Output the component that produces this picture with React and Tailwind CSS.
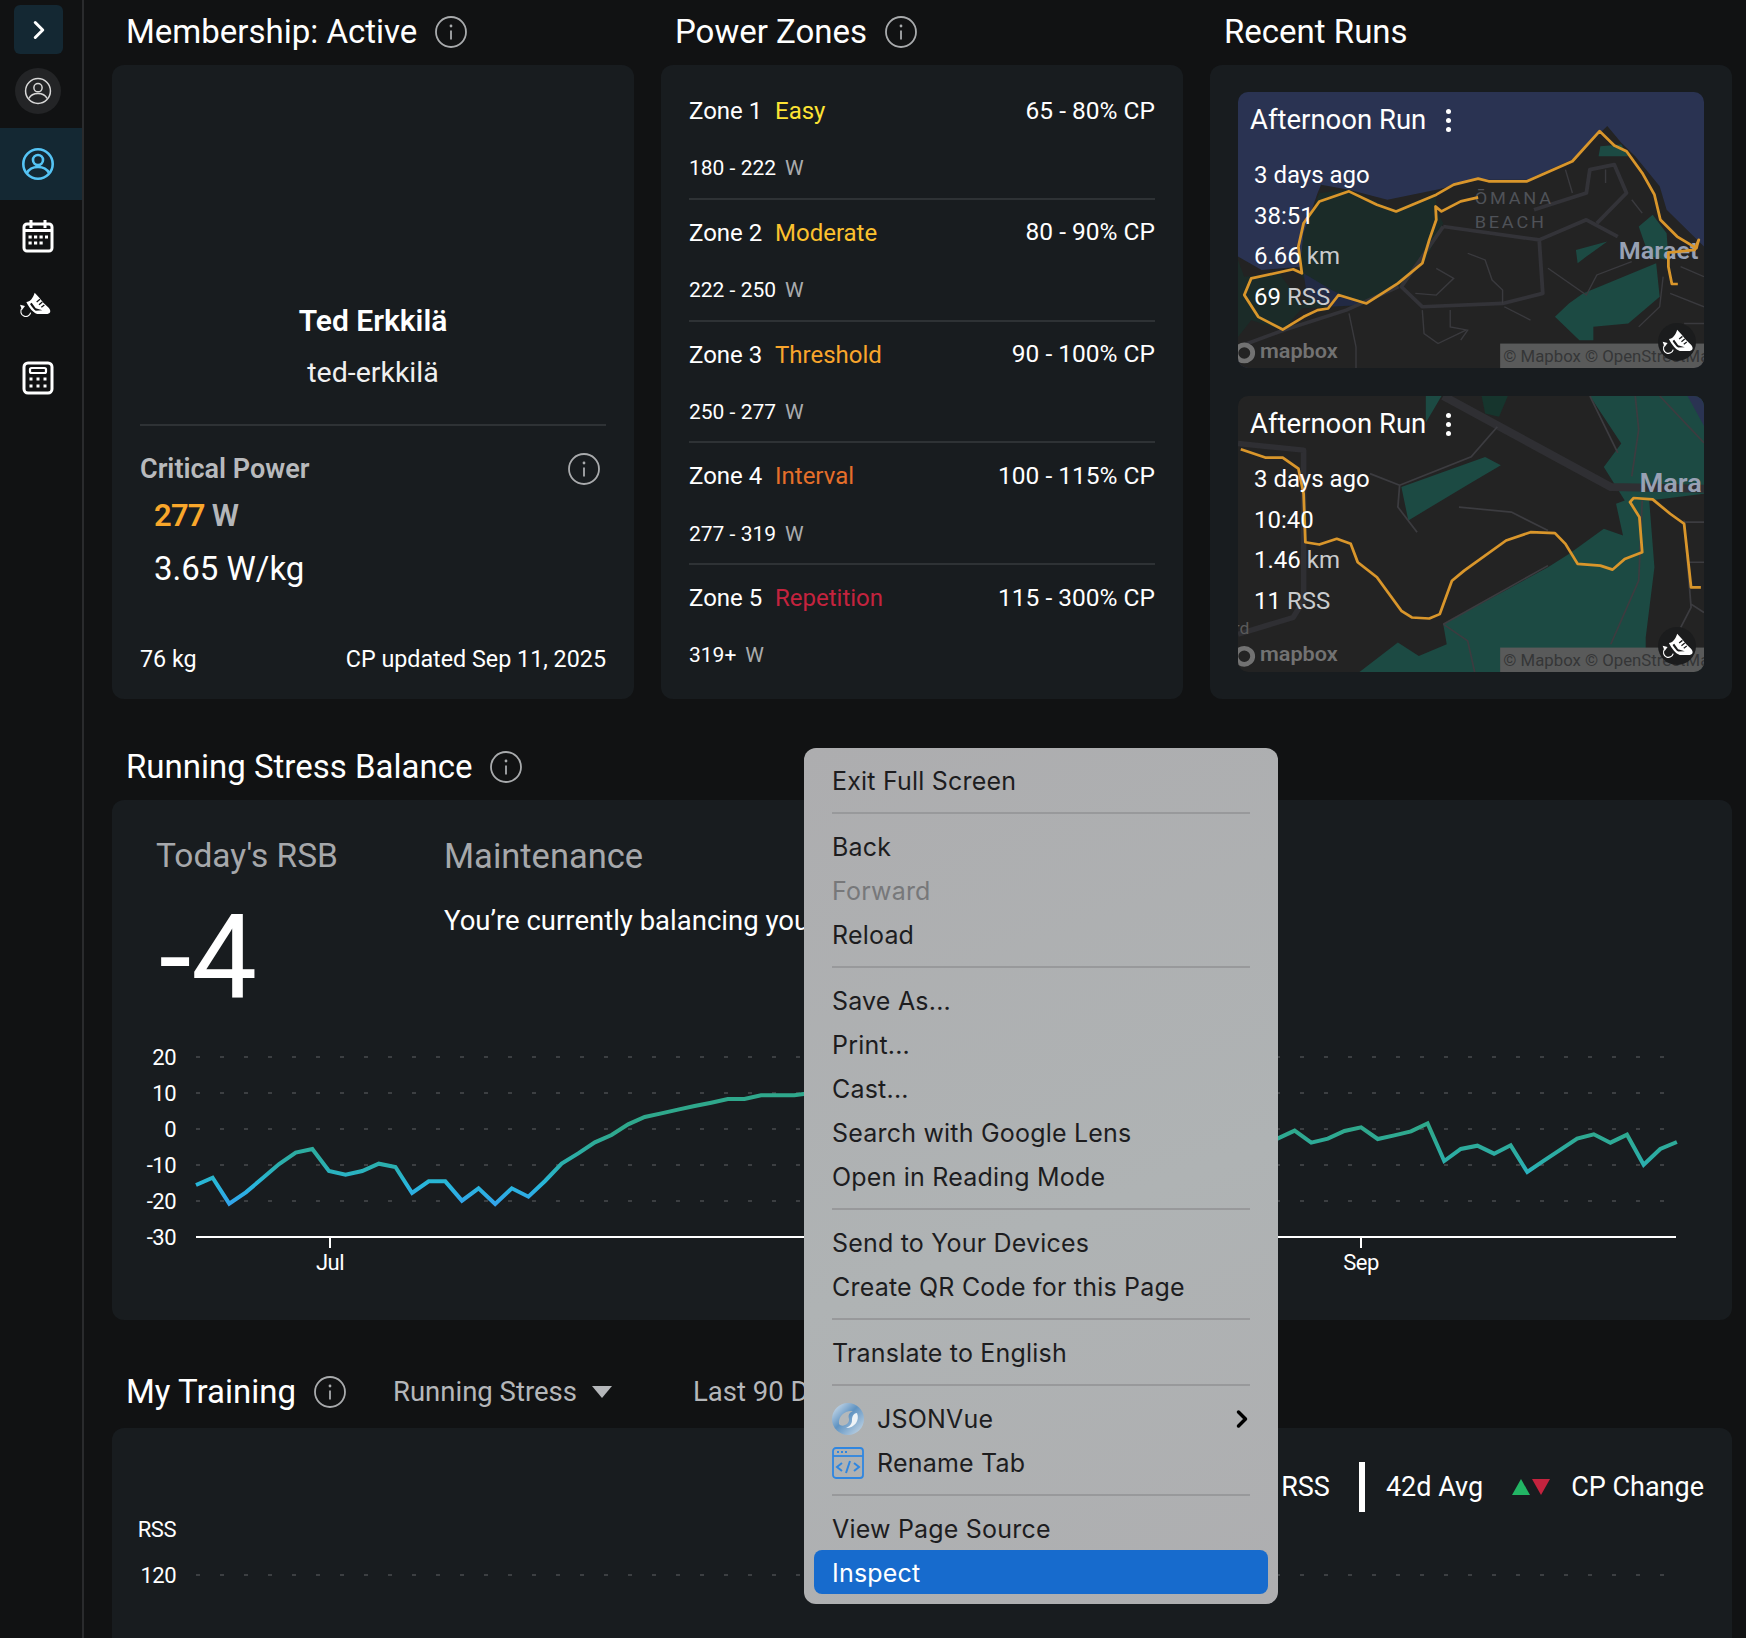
import React from 'react';
import { ChevronRight } from 'lucide-react';

const zones = [
  { name: 'Zone 1', label: 'Easy', color: 'text-[#fde334]', pct: '65 - 80% CP', watts: '180 - 222' },
  { name: 'Zone 2', label: 'Moderate', color: 'text-[#fcc12e]', pct: '80 - 90% CP', watts: '222 - 250' },
  { name: 'Zone 3', label: 'Threshold', color: 'text-[#f9a52c]', pct: '90 - 100% CP', watts: '250 - 277' },
  { name: 'Zone 4', label: 'Interval', color: 'text-[#e56f2a]', pct: '100 - 115% CP', watts: '277 - 319' },
  { name: 'Zone 5', label: 'Repetition', color: 'text-[#c4233e]', pct: '115 - 300% CP', watts: '319+' },
];

// y values read off the chart, one point per day
const rsbStart = [495, 473, 551, 517, 475, 432, 398, 387, 453, 464, 453, 431, 441, 519, 484, 484, 542, 505, 552, 505, 530, 483, 431, 400, 367, 345, 313, 291, 280, 269, 258, 248, 237, 237, 226, 226, 226, 219];
const rsbEnd = [235, 212, 248, 236, 213, 202, 237, 226, 214, 190, 303, 267, 257, 281, 256, 336, 302, 269, 236, 223, 248, 224, 314, 267, 246];

const rsbPoints = [
  ...rsbStart.map((y, i) => `${196 + i * 16.62},${1020 + y / 3}`),
  ...rsbEnd.map((y, i) => `${1278 + i * 16.62},${1060 + y / 3}`),
].join(' ');

const Info = ({ className = '' }) => (
  <svg viewBox="0 0 32 32" className={`w-8 h-8 shrink-0 ${className}`} fill="none">
    <circle cx="16" cy="16" r="15" stroke="#a9abad" strokeWidth="1.8" />
    <circle cx="16" cy="10" r="1.4" fill="#a9abad" />
    <path d="M16 14.5v9" stroke="#a9abad" strokeWidth="1.8" />
  </svg>
);

const UserCircle = ({ color, width, className }) => (
  <svg viewBox="0 0 34 34" className={className} fill="none">
    <circle cx="17" cy="17" r={16 - width / 2} stroke={color} strokeWidth={width} />
    <circle cx="17" cy="13" r="5" stroke={color} strokeWidth={width} />
    <path d="M6 26c2-4 6-6 11-6s9 2 11 6" stroke={color} strokeWidth={width} />
  </svg>
);

const CalendarIcon = () => (
  <svg viewBox="0 0 32 34" className="w-[32px] h-[34px]" fill="none">
    <rect x="2" y="5" width="28" height="27" rx="3" stroke="#fff" strokeWidth="3" />
    <path d="M2 11.5h28" stroke="#fff" strokeWidth="3" />
    <path d="M9 1v8M23 1v8" stroke="#fff" strokeWidth="3" />
    <path d="M6.5 18h3.2M12 18h3.2M17.5 18h3.2M23 18h3M6.5 24h3.2M12 24h3.2M17.5 24h3.2" stroke="#fff" strokeWidth="3" />
  </svg>
);

const CalcIcon = () => (
  <svg viewBox="0 0 32 34" className="w-[32px] h-[34px]" fill="none">
    <rect x="2" y="2" width="28" height="30" rx="4" stroke="#fff" strokeWidth="3" />
    <rect x="8" y="7" width="16" height="5" rx="1.5" stroke="#fff" strokeWidth="2.2" />
    <path d="M7.5 18h3M14.5 18h3M21.5 18h3M7.5 25h3M14.5 25h3M21.5 25h3" stroke="#fff" strokeWidth="3" />
  </svg>
);

// coordinates follow the shoe in the 3x crop of the sidebar
const RunIcon = ({ className, cut = '#111213' }) => (
  <svg viewBox="55 870 100 90" className={className} fill="none">
    <path d="M104 878l14 15 12 15 16 15c9 11 5 19-8 19h-26c-12-3-24-18-33-36 11-1 20-11 25-28z" fill="#fff" />
    <path d="M110 906l10-8M117 914l10-8M124 922l9-7" stroke={cut} strokeWidth="4" />
    <path d="M95 908l12 17 20 6-20 1c-6-4-12-12-17-20z" fill={cut} />
    <path d="M92 938a15 15 0 1 1-27-12" stroke="#fff" strokeWidth="3.5" />
    <path d="M60 914l15 4-9 12z" fill="#fff" />
  </svg>
);

const Heading = ({ children, info = true }) => (
  <div className="flex items-center gap-[18px] pl-[14px]">
    <h2 className="text-[33px] leading-[40px] text-white whitespace-nowrap">{children}</h2>
    {info && <Info />}
  </div>
);

const MapOne = () => (
  <svg viewBox="112 98 1335 825" preserveAspectRatio="none" className="absolute inset-0 w-full h-full">
    <rect x="112" y="98" width="1335" height="825" fill="#2a3352" />
    <path d="M112 590l68 40 110-10 10-100 40-120 10-25 80 15 110 30 140-30 120-30 140 0 130-60 100-100 40 50 40 40 70 90 20 70 107 110v363H112z" fill="#232323" />
    <path d="M300 520l45-120 85-10 130 60 120-50v50l20 40-50 110-80 80-100 55-180 10 40-45-40-60zM112 600l18 50 100-10 70 100-60 70-90-30-38 50z" fill="#1b2b28" />
    <path d="M300 640l80 50 90 45-100 5-60-30z" fill="#222a44" />
    <path d="M1100 700l210-90 10 100-90 80-100 10v40h-40l-70-70 40-40zM1260 500l40-35 40 55 5 80-55-10zM1150 260l60-5 20 35-85 0zM1080 570l90-25-60 45-25 20z" fill="#1c4a43" />
    <g fill="none" stroke="#333338" strokeWidth="11" strokeLinejoin="round">
      <path d="M700 500l275 40 135-60 90 50M975 540l10 160-115 30-230 10-60-60 120-180" />
      <path d="M960 450l150-50 10-70 70-15 35 85-85 90" />
      <path d="M112 860l130-50 180-60 150-70" />
    </g>
    <g fill="none" stroke="#3a3a3e" strokeWidth="4">
      <path d="M770 580l50 20 20 60 30 30v40M640 750l5 70 40 30 80-40M720 750v50l50 10-20 30M875 740l75 40M680 625l50 30-50 50-60-5" />
      <path d="M1000 625l110 80 30-60 100-40M1050 330l20 70M1165 330v40M1240 420l30 40M1330 650l-10 90-60 60M1380 620l67 30M1350 700l97 40M1390 790h57M430 760l20 100v63" />
    </g>
    <text x="790" y="432" fill="#4f5258" fontSize="52" letterSpacing="8">ŌMANA</text>
    <text x="790" y="505" fill="#4f5258" fontSize="52" letterSpacing="8">BEACH</text>
    <text x="1203" y="597" fill="#98a1b4" fontSize="72" fontWeight="600">Maraet</text>
    <polyline
      fill="none"
      stroke="#d9962b"
      strokeWidth="8"
      strokeLinejoin="round"
      points="800,413 750,425 695,455 678,440 680,480 660,540 640,610 570,670 480,730 400,705 370,745 340,750 300,770 240,808 170,770 130,705 150,655 270,628 295,640 285,560 300,490 345,425 430,395 510,435 565,455 680,405 730,375 800,357 830,365 940,365 1070,305 1148,215 1190,258 1225,275 1270,340 1305,405 1322,480 1370,530 1425,565 1432,540 1420,570 1345,578 1345,620 1355,672 1372,672"
    />
    <rect x="863" y="850" width="584" height="73" fill="#595a5a" />
    <text x="872" y="906" fill="#353637" fontSize="48">© Mapbox © OpenStreetMap</text>
    <circle cx="130" cy="878" r="24" fill="none" stroke="#727272" strokeWidth="14" />
    <text x="175" y="893" fill="#727272" fontSize="62" fontWeight="600">mapbox</text>
  </svg>
);

const MapTwo = () => (
  <svg viewBox="112 48 1335 825" preserveAspectRatio="none" className="absolute inset-0 w-full h-full">
    <rect x="112" y="48" width="1335" height="825" fill="#232323" />
    <path d="M1120 48h327v825H460l110-88 60 40 80-35-10-60 300-170 60-40 100-75 55 20-20-95 25-10-60-100 50-70z" fill="#1c4a43" />
    <path d="M1290 360l157-20v533h-167v-103l25-210z" fill="#232323" />
    <path d="M580 320l240-90 45 25-90 55-175 110zM650 48h45l-45 80z" fill="#1c4a43" />
    <path d="M810 48h75l-25 62-40-10z" fill="#16352d" />
    <path d="M1400 48h47v90z" fill="#2a3352" />
    <g fill="none" stroke="#2f2f33" strokeLinejoin="round">
      <path d="M700 48l480 272 267 5" strokeWidth="24" />
      <path d="M112 190l188 20v450l-30 50-158 50" strokeWidth="16" />
    </g>
    <g fill="none" stroke="#3c3c40" strokeWidth="5">
      <path d="M490 280l85 35-5 65 55 75M575 315l205-85 75-90M745 380l150 15 105 55M700 730l300-175M700 730l70 50 20 93" />
      <path d="M1270 360l-10 240-80 190M1390 420l20 260-30 60M1410 670l37 25M1390 425h57M1405 545h42M1250 48l10 100-20 140M1120 48l80 170M1320 48l127 140" />
    </g>
    <text x="1262" y="335" fill="#98a1b4" fontSize="78" fontWeight="600">Mara</text>
    <text x="100" y="760" fill="#5a5a5a" fontSize="50">rd</text>
    <polyline
      fill="none"
      stroke="#d9962b"
      strokeWidth="8"
      strokeLinejoin="round"
      points="120,207 190,232 240,232 285,265 300,340 305,485 345,492 395,475 435,490 455,545 510,590 580,690 610,710 660,713 690,700 725,600 760,570 880,480 950,455 1020,458 1050,490 1085,550 1150,555 1185,567 1220,535 1270,515 1262,410 1235,365 1245,353 1300,357 1350,400 1390,430 1410,620 1438,620"
    />
    <rect x="863" y="800" width="584" height="73" fill="#595a5a" />
    <text x="872" y="856" fill="#353637" fontSize="48">© Mapbox © OpenStreetMap</text>
    <circle cx="130" cy="826" r="24" fill="none" stroke="#727272" strokeWidth="14" />
    <text x="175" y="841" fill="#727272" fontSize="62" fontWeight="600">mapbox</text>
  </svg>
);

const RunCard = ({ map, time, km, rss }) => (
  <div className="relative h-[276px] rounded-[10px] overflow-hidden">
    {map}
    <div className="relative pl-[12px] pt-[10px]">
      <div className="flex items-center h-[36px] text-[27.5px] text-white">
        Afternoon Run
        <span className="ml-[20px] flex flex-col gap-[4px]">
          <i className="block w-[5px] h-[5px] rounded-full bg-white" />
          <i className="block w-[5px] h-[5px] rounded-full bg-white" />
          <i className="block w-[5px] h-[5px] rounded-full bg-white" />
        </span>
      </div>
      <div className="mt-[17px] pl-[4px] text-[24px] leading-[40.5px] text-white">
        <p>3 days ago</p>
        <p>{time}</p>
        <p>
          {km} <span className="text-[#c9cbcd]">km</span>
        </p>
        <p>
          {rss} <span className="text-[#c9cbcd]">RSS</span>
        </p>
      </div>
    </div>
    <div className="absolute right-[8px] bottom-[7px] w-[38px] h-[38px] rounded-full bg-[#1b1c1d] flex items-center justify-center">
      <RunIcon className="w-[33px] h-[30px]" cut="#1b1c1d" />
    </div>
  </div>
);

const MenuItem = ({ children, muted, active, icon, arrow }) => (
  <div
    className={`h-[44px] flex items-center rounded-[8px] pl-[18px] pr-[20px] pt-[4px] ${
      active ? 'bg-[#176bcd] text-white' : muted ? 'text-[#77787a]' : 'text-[#1d1d1f]'
    }`}
  >
    {icon && <span className="w-[45px] shrink-0 flex items-center -mt-[3px]">{icon}</span>}
    <span className="flex-1">{children}</span>
    {arrow && <ChevronRight size={28} strokeWidth={3} className="text-black -mr-[8px] -mt-[3px]" />}
  </div>
);

const Sep = () => <div className="h-[2px] my-[10px] mx-[18px] bg-[#98999b]" />;

const ContextMenu = () => (
  <div className="absolute left-[804px] top-[748px] w-[474px] h-[856px] rounded-[12px] px-[10px] pt-[10px] bg-[linear-gradient(160deg,#adadaf,#afb3b4_55%,#aeaeb0)] [font-family:Inter,sans-serif] text-[25px] tracking-[0.2px]">
    <MenuItem>Exit Full Screen</MenuItem>
    <Sep />
    <MenuItem>Back</MenuItem>
    <MenuItem muted>Forward</MenuItem>
    <MenuItem>Reload</MenuItem>
    <Sep />
    <MenuItem>Save As...</MenuItem>
    <MenuItem>Print...</MenuItem>
    <MenuItem>Cast...</MenuItem>
    <MenuItem>Search with Google Lens</MenuItem>
    <MenuItem>Open in Reading Mode</MenuItem>
    <Sep />
    <MenuItem>Send to Your Devices</MenuItem>
    <MenuItem>Create QR Code for this Page</MenuItem>
    <Sep />
    <MenuItem>Translate to English</MenuItem>
    <Sep />
    <MenuItem
      arrow
      icon={
        <svg viewBox="0 0 32 32" className="w-8 h-8">
          <defs>
            <linearGradient id="jv" x1="0" y1="0" x2="1" y2="1">
              <stop offset="0" stopColor="#dfe8f0" />
              <stop offset="0.45" stopColor="#5f93c2" />
              <stop offset="1" stopColor="#cfdde9" />
            </linearGradient>
          </defs>
          <circle cx="16" cy="16" r="16" fill="url(#jv)" />
          <path d="M7 21c-1-8 6-14 14-13-4 2-5 4-4 8 1 5-7 9-10 5z" fill="#b4b8ba" />
          <path d="M25 10c3 7-2 15-11 15 4-2 6-4 6-8 0-4 2-7 5-7z" fill="#eef3f7" />
        </svg>
      }
    >
      JSONVue
    </MenuItem>
    <MenuItem
      icon={
        <svg viewBox="0 0 32 32" className="w-8 h-8" fill="none" stroke="#2f86e0" strokeWidth="1.8">
          <rect x="1" y="1" width="30" height="30" rx="3" />
          <path d="M1 9h30" />
          <path d="M5 5h2M9 5h2M13 5h2" />
          <path d="M10 16l-5 4 5 4M22 16l5 4-5 4M18 14l-4 12" strokeWidth="2" />
        </svg>
      }
    >
      Rename Tab
    </MenuItem>
    <Sep />
    <MenuItem>View Page Source</MenuItem>
    <MenuItem active>Inspect</MenuItem>
  </div>
);

const App = () => {
  return (
    <div className="relative flex h-screen overflow-hidden bg-[#111213] text-white [font-family:Roboto,sans-serif]">
      {/* Sidebar */}
      <aside className="w-[84px] shrink-0 border-r-2 border-[#2a2b2d] flex flex-col items-stretch">
        <button className="mt-[5px] ml-[14px] w-[49px] h-[49px] rounded-[6px] bg-[#142833] flex items-center justify-center">
          <ChevronRight size={30} strokeWidth={2.4} className="text-white" />
        </button>
        <div className="mt-[14px] ml-[15px] w-[46px] h-[46px] rounded-full bg-[#232426] flex items-center justify-center">
          <UserCircle color="#d8d8d8" width={1.8} className="w-[28px] h-[28px]" />
        </div>
        <div className="mt-[14px] h-[72px] bg-[#142833] flex items-center pl-[21px]">
          <UserCircle color="#55c4f5" width={2.6} className="w-[34px] h-[34px]" />
        </div>
        <div className="h-[72px] flex items-center pl-[22px]">
          <CalendarIcon />
        </div>
        <div className="h-[66px] flex items-center pl-[18px]">
          <RunIcon className="w-[34px] h-[30px]" />
        </div>
        <div className="h-[76px] pt-[4px] flex items-center pl-[22px]">
          <CalcIcon />
        </div>
      </aside>

      <main className="flex-1 min-w-0 pl-[28px] pr-[14px]">
        {/* Top row */}
        <div className="grid grid-cols-3 gap-[27px]">
          <section>
            <div className="h-[65px] flex items-center pb-[2px]">
              <Heading>Membership: Active</Heading>
            </div>
            <div className="h-[634px] rounded-[12px] bg-[#181c1f] px-[28px] flex flex-col">
              <p className="mt-[238px] text-center text-[30px] leading-[36px] font-semibold">Ted Erkkilä</p>
              <p className="mt-[18px] text-center text-[28.5px] leading-[32px] text-[#f0f0f0]">ted-erkkilä</p>
              <div className="mt-[35px] h-[2px] bg-[#2e3235]" />
              <div className="mt-[27px] flex items-center justify-between pr-[6px]">
                <span className="text-[27px] leading-[32px] font-semibold text-[#b8babd]">Critical Power</span>
                <Info />
              </div>
              <p className="mt-[11px] pl-[14px] text-[31px] leading-[40px] font-semibold tracking-[-0.8px] text-[#f9a72b]">
                277 <span className="text-[#b4b6b9]">W</span>
              </p>
              <p className="mt-[11px] pl-[14px] text-[33px] leading-[44px]">3.65 W/kg</p>
              <div className="mt-auto pb-[25px] flex justify-between text-[23.3px] leading-[30px]">
                <span>76 kg</span>
                <span>CP updated Sep 11, 2025</span>
              </div>
            </div>
          </section>

          <section>
            <div className="h-[65px] flex items-center pb-[2px]">
              <Heading>Power Zones</Heading>
            </div>
            <div className="h-[634px] rounded-[12px] bg-[#181c1f] px-[28px] pt-[13px]">
              {zones.map((z, i) => (
                <div key={z.name} className={`h-[121.8px] pt-[17px] ${i < 4 ? 'border-b-2 border-[#2e3235]' : ''}`}>
                  <div className="flex items-center justify-between h-[32px] text-[24px]">
                    <div className="flex">
                      <span className="w-[86px]">{z.name}</span>
                      <span className={z.color}>{z.label}</span>
                    </div>
                    <span className="text-[24.5px]">{z.pct}</span>
                  </div>
                  <p className="mt-[26px] h-[32px] flex items-center text-[21px]">
                    {z.watts}
                    <span className="ml-[9px] text-[#a9abad]">W</span>
                  </p>
                </div>
              ))}
            </div>
          </section>

          <section>
            <div className="h-[65px] flex items-center pb-[2px]">
              <Heading info={false}>Recent Runs</Heading>
            </div>
            <div className="h-[634px] rounded-[12px] bg-[#181c1f] px-[28px] pt-[27px] flex flex-col gap-[28px]">
              <RunCard map={<MapOne />} time="38:51" km="6.66" rss="69" />
              <RunCard map={<MapTwo />} time="10:40" km="1.46" rss="11" />
            </div>
          </section>
        </div>

        {/* Running Stress Balance */}
        <div className="h-[101px] pt-[34px] flex items-center">
          <Heading>Running Stress Balance</Heading>
        </div>
        <div className="h-[520px] rounded-[12px] bg-[#181c1f] overflow-hidden">
          <div className="h-[240px] flex pl-[44px] pt-[36px]">
            <div className="w-[288px]">
              <p className="text-[33.5px] leading-[40px] text-[#a6a8ab]">Today's RSB</p>
              <p className="mt-[26px] ml-[3px] text-[117px] leading-[110px]">-4</p>
            </div>
            <div>
              <p className="text-[34.5px] leading-[40px] text-[#a6a8ab]">Maintenance</p>
              <p className="mt-[25px] text-[27.5px] leading-[40px] whitespace-nowrap">
                You’re currently balancing your training and your recovery
              </p>
            </div>
          </div>
          <svg viewBox="112 1040 1620 250" className="block w-full h-[250px]">
            <defs>
              <linearGradient id="rsb" gradientUnits="userSpaceOnUse" x1="0" y1="1130" x2="0" y2="1205">
                <stop offset="0" stopColor="#2fa88c" />
                <stop offset="0.47" stopColor="#2bafae" />
                <stop offset="0.73" stopColor="#28b7dc" />
                <stop offset="1" stopColor="#33a3ec" />
              </linearGradient>
            </defs>
            {[
              ['20', 1057],
              ['10', 1093],
              ['0', 1129],
              ['-10', 1165],
              ['-20', 1201],
              ['-30', 1237],
            ].map(([label, y]) => (
              <g key={label}>
                <text x="176" y={y + 8} textAnchor="end" fill="#fff" fontSize="22" letterSpacing="-0.5">
                  {label}
                </text>
                {y < 1237 && <path d={`M196 ${y}H1664`} stroke="#3c3f42" strokeWidth="2" strokeDasharray="4 20" />}
              </g>
            ))}
            <path d="M196 1237H1676" stroke="#fff" strokeWidth="2" />
            <path d="M330 1237v11M1361 1237v11" stroke="#fff" strokeWidth="2" />
            <text x="330" y="1270" textAnchor="middle" fill="#fff" fontSize="22" letterSpacing="-0.5">Jul</text>
            <text x="1361" y="1270" textAnchor="middle" fill="#fff" fontSize="22" letterSpacing="-0.5">Sep</text>
            <polyline points={rsbPoints} fill="none" stroke="url(#rsb)" strokeWidth="4" strokeLinejoin="miter" />
          </svg>
        </div>

        {/* My Training */}
        <div className="h-[108px] pt-[36px] flex items-center">
          <Heading>My Training</Heading>
          <div className="ml-[47px] flex items-center text-[27.5px] text-[#b5b7ba]">
            Running Stress
            <svg viewBox="0 0 20 12" className="ml-[15px] w-[20px] h-[12px]">
              <path d="M0 0h20L10 12z" fill="#b5b7ba" />
            </svg>
            <span className="ml-[81px] whitespace-nowrap">Last 90 Days</span>
          </div>
        </div>
        <div className="h-[300px] rounded-[12px] bg-[#181c1f] overflow-hidden">
          <div className="flex items-center justify-end h-[50px] mt-[34px] pr-[28px] text-[27px]">
            <span>RSS</span>
            <i className="ml-[29px] w-[6px] h-[50px] bg-white" />
            <span className="ml-[21px]">42d Avg</span>
            <svg viewBox="0 0 38 16" className="ml-[29px] w-[38px] h-[16px]">
              <path d="M0 16L9 0l9 16z" fill="#22b564" />
              <path d="M20 0h18l-9 16z" fill="#c4233e" />
            </svg>
            <span className="ml-[21px]">CP Change</span>
          </div>
          <svg viewBox="112 1512 1620 130" className="block w-full h-[130px]">
            <text x="176" y="1537" textAnchor="end" fill="#fff" fontSize="22" letterSpacing="-0.5">RSS</text>
            <text x="176" y="1583" textAnchor="end" fill="#fff" fontSize="22" letterSpacing="-0.5">120</text>
            <path d="M196 1575H1664" stroke="#3c3f42" strokeWidth="2" strokeDasharray="4 20" />
          </svg>
        </div>
      </main>

      <ContextMenu />
    </div>
  );
};

export default App;
